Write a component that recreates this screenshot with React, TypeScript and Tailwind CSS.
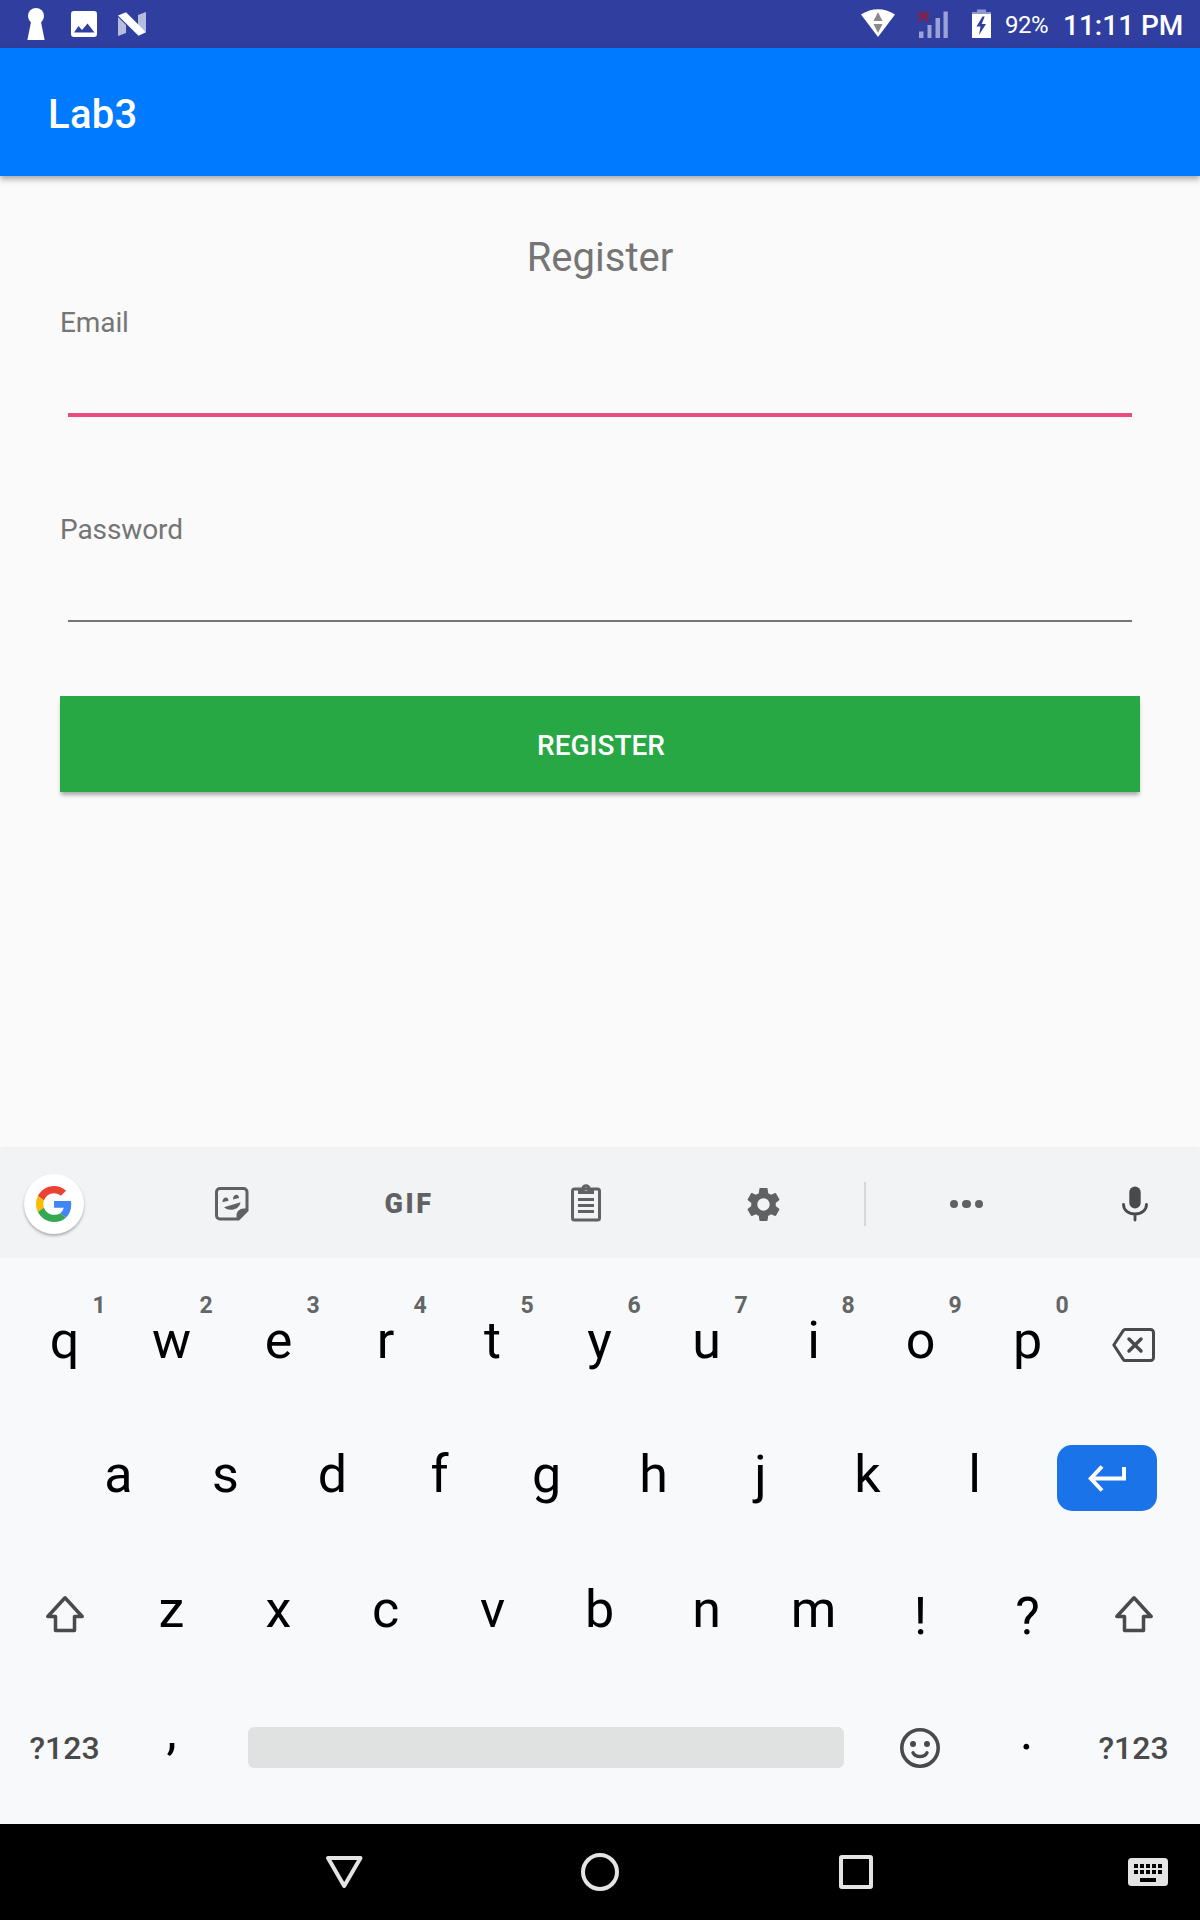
import type { ReactNode } from "react";
import { MdSettings } from "react-icons/md";

function StatusBar() {
  return (
    <div className="flex h-12 items-start bg-[#303f9f] text-white">
      <svg className="h-12 w-[160px]" viewBox="0 0 160 48" fill="#fff">
        <circle cx="36" cy="16" r="8" />
        <path d="M31 22h10l3.6 18H27.4z" />
        <path
          fillRule="evenodd"
          d="M74 11h20a3 3 0 0 1 3 3v20a3 3 0 0 1-3 3H74a3 3 0 0 1-3-3V14a3 3 0 0 1 3-3zm0 21.500h20.500l-7-9-5.500 6.500-3.500-4z"
        />
        <path d="M118 17l8 8v8l-8 3zM138 15l8-3v20l-8-6z" opacity=".65" />
        <path d="M118 15.500l8-3.200 20 20-7.500 3.500z" />
      </svg>
      <svg className="ml-[700px] h-12 w-[140px]" viewBox="860 0 140 48">
        <path d="M861 14.500Q878 4 895 14.500L878 37z" fill="#fff" />
        <path d="M878 12l4.500 9h-9zM878 33l4.500-9h-9z" fill="#8a8a8a" />
        <g fill="#9ba2d6">
          <path d="M919 31.500h4.500V38H919zM927.500 25h4V38h-4zM935.500 18h4.500V38h-4.500zM943.500 11.500h4.300V38h-4.300z" />
        </g>
        <path d="M918.500 11.500l10 9.500M928.500 11.500l-10 9.500" stroke="#8d1f43" strokeWidth="3" />
        <path d="M977 9.500h9V12h5v3h-19v-3h5z" fill="#8f97cf" />
        <path d="M972 14h19v24h-19z" fill="#fff" />
        <path d="M982.500 16.500l-6 10h4l-1.500 8.500 7-11h-4.300l3-7.500z" fill="#303f9f" />
      </svg>
      <span className="ml-[5px] mt-px w-[58px] text-2xl leading-[48px] tracking-[-0.500px]">92%</span>
      <span className="mt-[2px] text-[28px] font-medium leading-[48px]">11:11 PM</span>
    </div>
  );
}

function Field({ label, focused }: { label: string; focused?: boolean }) {
  return (
    <label className="flex flex-col">
      <span className="h-8 text-[28px] leading-8 tracking-[-0.100px] text-[#757575]">{label}</span>
      <span
        className={
          focused
            ? "mx-2 mt-[74px] h-1 bg-[#ea4c82]"
            : "mx-2 mt-[74px] h-[2px] bg-[#757575]"
        }
      />
    </label>
  );
}

function RegisterForm() {
  return (
    <main className="flex h-[973px] flex-col px-[60px] pt-[58px]">
      <h2 className="h-12 text-center text-[40px] leading-[48px] text-[#757575]">Register</h2>
      <div className="mt-[25px]">
        <Field label="Email" focused />
      </div>
      <div className="mt-[97px]">
        <Field label="Password" />
      </div>
      <button className="mt-[74px] h-24 bg-[#28a745] pl-[2px] pt-[3px] text-[28px] font-medium text-white shadow-[0_4px_4px_-1px_rgba(0,0,0,0.32)]">
        REGISTER
      </button>
    </main>
  );
}

function KeyboardToolbar() {
  return (
    <div className="flex h-[109px] items-center bg-[#f1f3f4] text-[#5f6163] shadow-[0_-1px_3px_rgba(0,0,0,0.08)]">
      <div className="w-[143px] pl-6">
        <div className="flex size-[60px] items-center justify-center rounded-full bg-white shadow-[0_2px_3px_rgba(0,0,0,0.28)]">
          <svg className="size-9" viewBox="0 0 48 48">
            <path fill="#EA4335" d="M24 9.500c3.540 0 6.710 1.220 9.210 3.600l6.850-6.850C35.900 2.380 30.470 0 24 0 14.620 0 6.510 5.380 2.560 13.220l7.980 6.190C12.430 13.720 17.740 9.500 24 9.500z" />
            <path fill="#4285F4" d="M46.980 24.550c0-1.570-.15-3.090-.38-4.550H24v9.020h12.940c-.58 2.960-2.260 5.480-4.780 7.180l7.730 6c4.510-4.180 7.090-10.360 7.090-17.650z" />
            <path fill="#FBBC05" d="M10.530 28.590c-.48-1.450-.76-2.990-.76-4.590s.27-3.140.76-4.590l-7.980-6.190C.92 16.460 0 20.120 0 24c0 3.880.92 7.540 2.560 10.780l7.970-6.190z" />
            <path fill="#34A853" d="M24 48c6.480 0 11.930-2.130 15.890-5.810l-7.730-6c-2.150 1.450-4.920 2.300-8.160 2.300-6.260 0-11.570-4.220-13.470-9.910l-7.980 6.190C6.510 42.620 14.620 48 24 48z" />
          </svg>
        </div>
      </div>
      <div className="flex w-[177px] justify-center">
        <svg className="size-9" viewBox="0 0 36 36">
          <path d="M24.500 33H6a3.500 3.500 0 0 1-3.500-3.500V6A3.500 3.500 0 0 1 6 2.500h23.500A3.500 3.500 0 0 1 33 6v18.500z" fill="none" stroke="currentColor" strokeWidth="3" />
          <path d="M22.500 34v-4.500a7 7 0 0 1 7-7H34v2L25 34zM8.500 16.300c0-6 6-6 6-1.500zM19 13.500c0-6 6-6 6-1.500zM10 21.300l16.500-5c-1 8-12 9.500-16.500 5z" fill="currentColor" />
        </svg>
      </div>
      <div className="flex w-[177px] justify-center pl-px text-[27px] font-black leading-8 tracking-[2.500px]">GIF</div>
      <div className="flex w-[178px] justify-center pb-[2px]">
        <svg className="h-[38px] w-[30px]" viewBox="0 0 30 38">
          <rect x="1.500" y="5" width="27" height="31" rx="2" fill="none" stroke="currentColor" strokeWidth="3" />
          <path fillRule="evenodd" d="M7 4h3.500a4.600 4.600 0 0 1 9 0H23v6H7zM15 3.300a1.900 1.900 0 1 0 0 3.800 1.900 1.900 0 0 0 0-3.800z" fill="currentColor" />
          <path d="M7 15.500h16M7 21.500h16M7 27.500h16" stroke="currentColor" strokeWidth="3" />
        </svg>
      </div>
      <div className="flex w-[177px] justify-center pt-0.5">
        <MdSettings className="size-[41px]" />
      </div>
      <div className="ml-3 h-11 w-[2px] bg-[#d5d7d9]" />
      <div className="flex w-[201px] justify-center gap-[4px] pt-px">
        <span className="size-[8.500px] rounded-full bg-[#5f6163]" />
        <span className="size-[8.500px] rounded-full bg-[#5f6163]" />
        <span className="size-[8.500px] rounded-full bg-[#5f6163]" />
      </div>
      <svg className="ml-[55px] h-9 w-[26px]" viewBox="0 0 26 36" fill="none" stroke="#4a4a4a">
        <rect x="7.300" y="0.500" width="11.400" height="22" rx="5.700" fill="#4a4a4a" stroke="none" />
        <path d="M1.500 18.500c0 5.500 5 9.500 11.500 9.500s11.500-4 11.500-9.500M13 28v6" strokeWidth="2.800" strokeLinecap="round" />
      </svg>
    </div>
  );
}

function Key({ children, hint, low }: { children: ReactNode; hint?: string; low?: boolean }) {
  return (
    <div className="relative flex w-[107px] items-center justify-center">
      <span
        className={
          low
            ? "mt-[5px] text-[52px] leading-[60px] text-black"
            : "-mt-[9px] text-[52px] leading-[60px] text-black"
        }
      >
        {children}
      </span>
      {hint && (
        <span className="absolute left-[76px] top-[16px] w-6 text-center text-[23px] font-bold leading-6 text-[#646665]">
          {hint}
        </span>
      )}
    </div>
  );
}

function IconKey({ children }: { children: ReactNode }) {
  return <div className="flex w-[107px] items-center justify-center text-[#4a4a4a]">{children}</div>;
}

function ShiftIcon() {
  return (
    <svg className="h-[38px] w-10" viewBox="0 0 40 38" fill="none" stroke="currentColor" strokeWidth="3.500" strokeLinejoin="round">
      <path d="M20 2.800L2.800 21.500H10.500V35.500h19V21.500h7.700z" />
    </svg>
  );
}

const numberedKeys = [..."qwertyuiop"];
const homeKeys = [..."asdfghjkl"];
const bottomKeys = [..."zxcvbnm"];

function Keyboard() {
  return (
    <section className="h-[566px] bg-[#f8f9fb] pl-[11px] pt-5">
      <div className="flex h-[134px]">
        {numberedKeys.map((k, i) => (
          <Key key={k} hint={String((i + 1) % 10)}>
            {k}
          </Key>
        ))}
        <div className="flex w-[105px] items-center justify-center text-[#4a4a4a]">
          <svg className="h-9 w-11" viewBox="0 0 44 36" fill="none" stroke="currentColor" strokeWidth="3" strokeLinejoin="round">
            <path d="M13 2.500h25.500a3 3 0 0 1 3 3v25a3 3 0 0 1-3 3H13q-1 0-1.600-.9L1.800 18 11.400 3.400Q12 2.500 13 2.500z" />
            <path d="M17 12l12 12M29 12L17 24" strokeWidth="3.500" strokeLinecap="round" />
          </svg>
        </div>
      </div>
      <div className="flex h-[134px] pl-[54px]">
        {homeKeys.map((k) => (
          <Key key={k}>{k}</Key>
        ))}
        <div className="ml-[29px] mt-[33px] flex h-[66px] w-[100px] items-center justify-center rounded-[15px] bg-[#1a73e8]">
          <svg className="h-[27px] w-[38px]" viewBox="0 0 38 27" fill="none" stroke="#fff" strokeWidth="4">
            <path d="M14 1.500L2.800 13.500 14 25.500M3 13.500h33V2" />
          </svg>
        </div>
      </div>
      <div className="flex h-[135px] pt-px">
        <IconKey>
          <ShiftIcon />
        </IconKey>
        {bottomKeys.map((k) => (
          <Key key={k}>{k}</Key>
        ))}
        <Key low>!</Key>
        <Key low>?</Key>
        <div className="flex w-[105px] items-center justify-center text-[#4a4a4a]">
          <ShiftIcon />
        </div>
      </div>
      <div className="flex h-[133px] items-center">
        <div className="w-[107px] pt-px text-center text-[32px] font-medium text-[#4a4a4a]">?123</div>
        <div className="w-[107px] pb-[32px] text-center text-[52px] leading-[60px] text-black">,</div>
        <div className="ml-[23px] h-[41px] w-[596px] rounded-md bg-[#e0e2e1]" />
        <div className="ml-[22px] flex w-[107px] justify-center text-[#4a4a4a]">
          <svg className="size-[42px]" viewBox="0 0 42 42" fill="none" stroke="currentColor">
            <circle cx="21" cy="21" r="18.200" strokeWidth="3.600" />
            <path d="M14 25.700c2.500 5 11.500 5 14 0" strokeWidth="3.400" strokeLinecap="round" />
            <circle cx="14" cy="17" r="3" fill="currentColor" stroke="none" />
            <circle cx="28" cy="17" r="3" fill="currentColor" stroke="none" />
          </svg>
        </div>
        <div className="w-[107px] pb-[32px] text-center text-[52px] leading-[60px] text-black">.</div>
        <div className="w-[107px] pt-px text-center text-[32px] font-medium text-[#4a4a4a]">?123</div>
      </div>
    </section>
  );
}

function NavigationBar() {
  return (
    <nav className="flex h-24 items-center bg-black text-[#e4e4e4]">
      <svg className="ml-[324px] size-10" viewBox="0 0 40 40" fill="none" stroke="currentColor" strokeWidth="4" strokeLinejoin="round">
        <path d="M4 6h32.500L20.200 34z" />
      </svg>
      <div className="ml-[217px] size-[38px] rounded-full border-4 border-current" />
      <div className="ml-[220px] size-[34px] rounded-[3px] border-4 border-current" />
      <svg className="ml-[255px] h-7 w-10" viewBox="0 0 40 28">
        <rect width="40" height="28" rx="3.500" fill="currentColor" />
        <path d="M6 8h28M6 14h28" stroke="#000" strokeWidth="4" strokeDasharray="4 2" />
        <path d="M12 22h16" stroke="#000" strokeWidth="4" />
      </svg>
    </nav>
  );
}

export default function App() {
  return (
    <div className="flex h-[1920px] w-[1200px] flex-col overflow-hidden bg-[#fafafa] font-['Roboto',sans-serif]">
      <StatusBar />
      <header className="z-10 flex h-32 items-center bg-[#007bff] pl-12 pt-[6px] text-[40px] font-medium tracking-[0.300px] text-white shadow-[0_3px_6px_rgba(0,0,0,0.35)]">
        Lab3
      </header>
      <RegisterForm />
      <KeyboardToolbar />
      <Keyboard />
      <NavigationBar />
    </div>
  );
}
